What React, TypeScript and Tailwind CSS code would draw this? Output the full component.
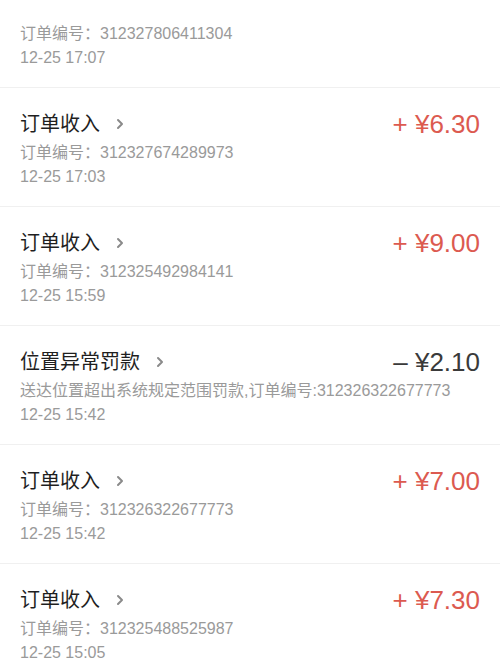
import { ChevronRight } from "lucide-react";

type Entry = {
  title: string;
  detail: string;
  time: string;
  amount: string;
  income: boolean;
};

const entries: Entry[] = [
  { title: "订单收入", detail: "订单编号：312327806411304", time: "12-25 17:07", amount: "+ ¥6.60", income: true },
  { title: "订单收入", detail: "订单编号：312327674289973", time: "12-25 17:03", amount: "+ ¥6.30", income: true },
  { title: "订单收入", detail: "订单编号：312325492984141", time: "12-25 15:59", amount: "+ ¥9.00", income: true },
  {
    title: "位置异常罚款",
    detail: "送达位置超出系统规定范围罚款,订单编号:312326322677773",
    time: "12-25 15:42",
    amount: "– ¥2.10",
    income: false,
  },
  { title: "订单收入", detail: "订单编号：312326322677773", time: "12-25 15:42", amount: "+ ¥7.00", income: true },
  { title: "订单收入", detail: "订单编号：312325488525987", time: "12-25 15:05", amount: "+ ¥7.30", income: true },
];

const FONT = { fontFamily: '"Liberation Sans", "Noto Sans CJK SC", sans-serif' };

const Row = ({ entry, first }: { entry: Entry; first: boolean }) => (
  <div className={first ? "pl-5" : "pl-5 border-t border-[#f0f0f0]"}>
    <div className="pr-5 pt-[22px] pb-[17px]">
      <div className="flex items-center justify-between h-7 mb-[3px]">
        <div className="flex items-center">
          <span className="text-[20px] leading-7 text-[#1f1f1f]">{entry.title}</span>
          <ChevronRight size={16} strokeWidth={3} className="ml-3 text-[#8a8a8a]" />
        </div>
        <span
          className={
            entry.income
              ? "text-[26px] leading-7 text-[#dc5a50]"
              : "text-[26px] leading-7 text-[#3a3a3a]"
          }
        >
          {entry.amount}
        </span>
      </div>
      <div className="text-[16px] leading-6 text-[#9a9a9a] whitespace-nowrap">{entry.detail}</div>
      <div className="text-[16px] leading-6 text-[#9a9a9a]">{entry.time}</div>
    </div>
  </div>
);

export default function App() {
  return (
    <div className="relative w-[500px] h-[667px] overflow-hidden bg-white" style={FONT}>
      <div className="-mt-[31px]">
        {entries.map((e, i) => (
          <Row key={i} entry={e} first={i === 0} />
        ))}
      </div>
      <div className="absolute top-0 left-0 right-0 h-[14px] bg-white" />
    </div>
  );
}
